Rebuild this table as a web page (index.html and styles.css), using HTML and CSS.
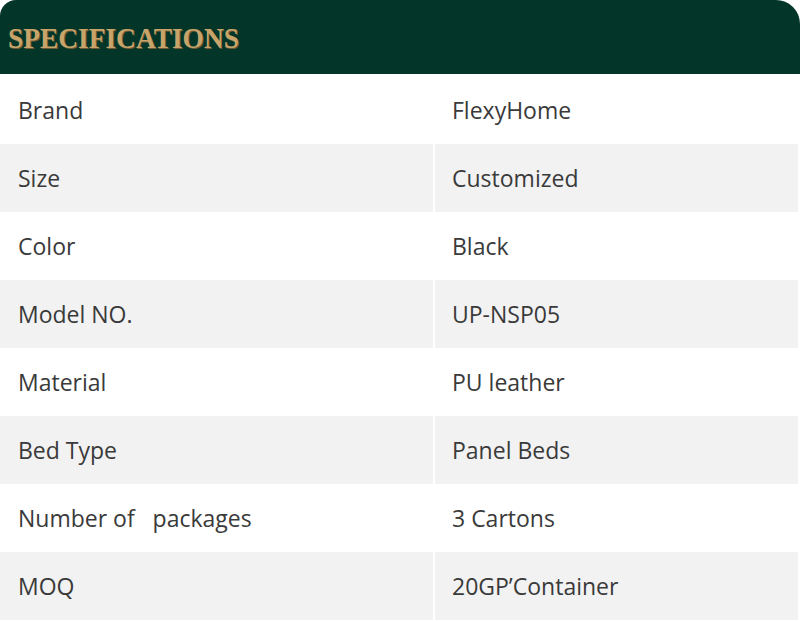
FILE: index.html
```html
<!DOCTYPE html>
<html>
<head>
<meta charset="utf-8">
<link rel="stylesheet" href="styles.css">
</head>
<body>
<div class="spec">
  <div class="spec-header"><h1 class="spec-title">SPECIFICATIONS</h1></div>
  <div class="spec-table">
    <div class="row"><div class="cell">Brand</div><div class="cell">FlexyHome</div></div>
    <div class="row alt"><div class="cell">Size</div><div class="cell">Customized</div></div>
    <div class="row"><div class="cell">Color</div><div class="cell">Black</div></div>
    <div class="row alt"><div class="cell">Model NO.</div><div class="cell">UP-NSP05</div></div>
    <div class="row"><div class="cell">Material</div><div class="cell">PU leather</div></div>
    <div class="row alt"><div class="cell">Bed Type</div><div class="cell">Panel Beds</div></div>
    <div class="row"><div class="cell">Number of&nbsp;&nbsp; packages</div><div class="cell">3 Cartons</div></div>
    <div class="row alt"><div class="cell">MOQ</div><div class="cell">20GP’Container</div></div>
  </div>
</div>
</body>
</html>
```

FILE: styles.css
```css
* { box-sizing: border-box; }
html, body { margin: 0; padding: 0; background: #ffffff; }
body { width: 800px; height: 621px; overflow: hidden; }
.spec { width: 800px; }
.spec-header {
  height: 74px;
  background: #033628;
  border-radius: 16px 24px 0 0;
  display: flex;
  align-items: center;
  padding-left: 8px;
  margin-bottom: 2px;
}
.spec-title {
  margin: 0;
  font-family: "Liberation Serif", serif;
  font-weight: bold;
  font-size: 29px;
  color: #c8a46a;
  letter-spacing: 0;
  display: inline-block;
  transform: scaleX(0.945);
  transform-origin: left center;
  text-shadow: 1px 1px 0 #6b5a34;
  padding-top: 2px;
}
.spec-table { display: flex; flex-direction: column; }
.row {
  display: grid;
  grid-template-columns: 433px 363px;
  column-gap: 2px;
  height: 68px;
}
.cell {
  display: flex;
  align-items: center;
  padding-left: 18px;
  font-family: "Open Sans", "Noto Sans", sans-serif;
  font-size: 23px;
  color: #3a3a3a;
  white-space: pre;
}
.cell + .cell { padding-left: 17px; }
.row.alt .cell { background: #f2f2f2; }
```
